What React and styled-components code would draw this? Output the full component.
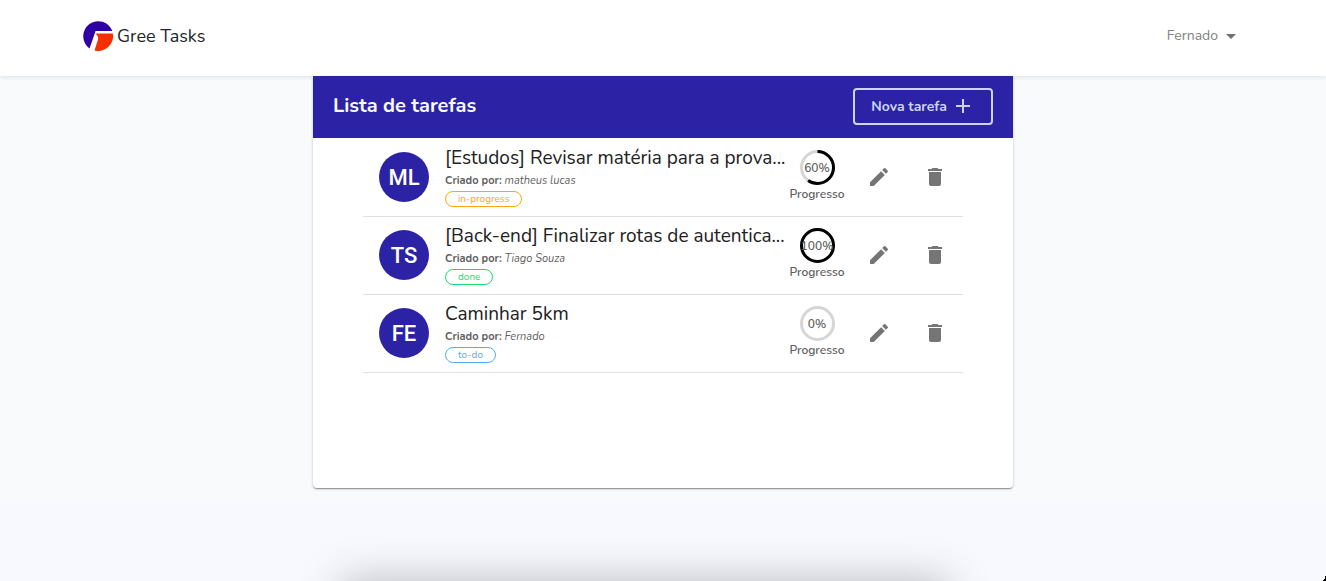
import React from "react";
import styled, { createGlobalStyle } from "styled-components";
import { MdAdd, MdDelete, MdEdit } from "react-icons/md";

const GlobalStyle = createGlobalStyle`
  *, *::before, *::after { box-sizing: border-box; }
  body {
    margin: 0;
    background: #f8fafc;
    color: #212529;
    font-family: Nunito, Lato, sans-serif;
    font-size: 14px;
    line-height: 1.5;
  }
  button { font-family: inherit; cursor: pointer; }
`;

const Page = styled.div`
  position: relative;
  display: flex;
  flex-direction: column;
  min-height: 100vh;
  overflow: hidden;
  background: linear-gradient(#f8fafc 505px, #f8f9fe 505px);
`;

const TopBar = styled.header`
  background: #fff;
  box-shadow: 0 2px 4px rgba(0, 0, 0, 0.08);
`;

const TopBarInner = styled.div`
  display: flex;
  align-items: center;
  justify-content: space-between;
  max-width: 1160px;
  height: 76px;
  margin: 0 auto;
  padding-bottom: 4px;
`;

const Brand = styled.a`
  display: flex;
  align-items: center;
  gap: 4px;
  color: #212529;
  font-size: 18px;
  line-height: 28px;
  text-decoration: none;
`;

const UserMenu = styled.button`
  display: flex;
  align-items: center;
  gap: 8px;
  padding: 0 7px;
  border: 0;
  background: none;
  color: #808182;
  font-size: 14px;
  line-height: 24px;
`;

const Caret = styled.span`
  border-top: 5px solid #6f7071;
  border-left: 5px solid transparent;
  border-right: 5px solid transparent;
`;

const Card = styled.main`
  position: relative;
  width: 100%;
  max-width: 700px;
  min-height: 412px;
  margin: 0 auto;
  border-radius: 0 0 4px 4px;
  background: #fff;
  box-shadow: 0 2px 1px -1px rgba(0, 0, 0, 0.2), 0 1px 1px rgba(0, 0, 0, 0.14),
    0 1px 3px rgba(0, 0, 0, 0.2);
`;

const CardHeader = styled.div`
  display: flex;
  align-items: center;
  justify-content: space-between;
  height: 62px;
  padding: 0 20px 2px;
  background: #2b22a5;
`;

const CardTitle = styled.h1`
  margin: 0;
  color: #f8fafc;
  font-size: 20px;
  font-weight: 700;
`;

const NewTaskButton = styled.button`
  display: flex;
  align-items: center;
  gap: 4px;
  height: 37px;
  padding: 0 16px;
  border: 2px solid #cbd5f0;
  border-radius: 4px;
  background: transparent;
  color: #cbd5f0;
  font-size: 14px;
  font-weight: 700;
`;

const TaskList = styled.ul`
  margin: 0;
  padding: 1px 50px 0;
  list-style: none;
`;

const TaskRow = styled.li`
  display: flex;
  align-items: center;
  height: 78px;
  padding: 0 0 2px 16px;
  border-bottom: 1px solid #e0e0e0;
`;

const Avatar = styled.div`
  display: flex;
  flex: none;
  align-items: center;
  justify-content: center;
  width: 50px;
  height: 50px;
  margin-right: 16px;
  padding-top: 2px;
  border-radius: 50%;
  background: #2b22a5;
  color: #fff;
  font-family: Roboto, sans-serif;
  font-size: 22px;
  font-weight: 500;
`;

const TaskText = styled.div`
  flex: 1;
  min-width: 0;
  padding-bottom: 4px;
  white-space: nowrap;
`;

const TaskTitle = styled.h2`
  margin: 0;
  color: #212121;
  font-size: 19px;
  font-weight: 400;
  line-height: 30px;
`;

const Author = styled.p`
  margin: 0;
  color: #5f5f5f;
  font-size: 11px;
  line-height: 16px;

  strong { font-weight: 700; }
`;

const Status = styled.span`
  display: block;
  width: fit-content;
  height: 16px;
  margin-top: 2px;
  padding: 0 12px;
  border: 1px solid ${(p) => p.$color};
  border-radius: 8px;
  color: ${(p) => p.$color};
  font-size: 10px;
  line-height: 14px;
`;

const Progress = styled.div`
  display: flex;
  flex: none;
  flex-direction: column;
  align-items: center;
  width: 56px;
  margin-right: 2px;
  color: #5f5f5f;
  font-size: 12px;
  font-weight: 600;
  line-height: 18px;
`;

const Ring = styled.div`
  display: grid;
  place-items: center;
  width: 35px;
  height: 35px;

  > * { grid-area: 1 / 1; }
`;

const IconButton = styled.button`
  display: flex;
  flex: none;
  align-items: center;
  justify-content: center;
  width: 48px;
  height: 48px;
  margin-left: 8px;
  padding: 0;
  border: 0;
  background: none;
  color: #757575;
`;

const Actions = styled.div`
  display: flex;
  flex: none;
  padding-right: 4px;
`;

const BottomShade = styled.div`
  position: absolute;
  top: 100%;
  left: 50%;
  width: 600px;
  height: 60px;
  margin-left: -318px;
  box-shadow: 0 4px 44px 4px rgba(0, 0, 0, 0.25);
`;

const WindowCorner = styled.div`
  position: absolute;
  right: 0;
  bottom: 0;
  width: 4px;
  height: 9px;
  background: radial-gradient(ellipse 4px 9px at 0 0, transparent 96%, #000 100%);
`;

const tasks = [
  { initials: "ML", title: "[Estudos] Revisar matéria para a prova...", author: "matheus lucas", status: "in-progress", color: "#ffa412", progress: 60 },
  { initials: "TS", title: "[Back-end] Finalizar rotas de autentica...", author: "Tiago Souza", status: "done", color: "#19dc70", progress: 100 },
  { initials: "FE", title: "Caminhar 5km", author: "Fernado", status: "to-do", color: "#53adf5", progress: 0 },
];

function Logo() {
  return (
    <svg width="30" height="30" viewBox="1 1 30 30" aria-hidden="true">
      <path d="M7.5 28.4A15 15 0 1 1 30.3 11H13.6Z" fill="#2f00a5" />
      <path d="M13.5 13.6H30.9A15 15 0 0 1 12.5 30.6L16.2 19Q16.4 16 13.5 13.6Z" fill="#f52f00" />
    </svg>
  );
}

function ProgressRing({ value }) {
  return (
    <Ring>
      <svg width="35" height="35" viewBox="0 0 35 35" aria-hidden="true">
        <circle cx="17.5" cy="17.5" r="16" fill="none" stroke="#d6d6d6" strokeWidth="3" />
        {value > 0 && (
          <circle
            cx="17.5" cy="17.5" r="16" fill="none" stroke="#000" strokeWidth="3"
            pathLength="100" strokeDasharray={`${value} 100`} transform="rotate(-90 17.5 17.5)"
          />
        )}
      </svg>
      <span>{value}%</span>
    </Ring>
  );
}

export default function App() {
  return (
    <Page>
      <GlobalStyle />
      <TopBar>
        <TopBarInner>
          <Brand href="#">
            <Logo />
            Gree Tasks
          </Brand>
          <UserMenu type="button" aria-haspopup="true">
            Fernado
            <Caret />
          </UserMenu>
        </TopBarInner>
      </TopBar>
      <Card>
        <CardHeader>
          <CardTitle>Lista de tarefas</CardTitle>
          <NewTaskButton type="button">
            Nova tarefa
            <MdAdd size={24} />
          </NewTaskButton>
        </CardHeader>
        <TaskList>
          {tasks.map((task) => (
            <TaskRow key={task.initials}>
              <Avatar>{task.initials}</Avatar>
              <TaskText>
                <TaskTitle>{task.title}</TaskTitle>
                <Author>
                  <strong>Criado por:</strong> <em>{task.author}</em>
                </Author>
                <Status $color={task.color}>{task.status}</Status>
              </TaskText>
              <Progress>
                <ProgressRing value={task.progress} />
                Progresso
              </Progress>
              <Actions>
                <IconButton type="button" aria-label="Editar">
                  <MdEdit size={24} />
                </IconButton>
                <IconButton type="button" aria-label="Excluir">
                  <MdDelete size={24} />
                </IconButton>
              </Actions>
            </TaskRow>
          ))}
        </TaskList>
      </Card>
      <BottomShade />
      <WindowCorner />
    </Page>
  );
}
